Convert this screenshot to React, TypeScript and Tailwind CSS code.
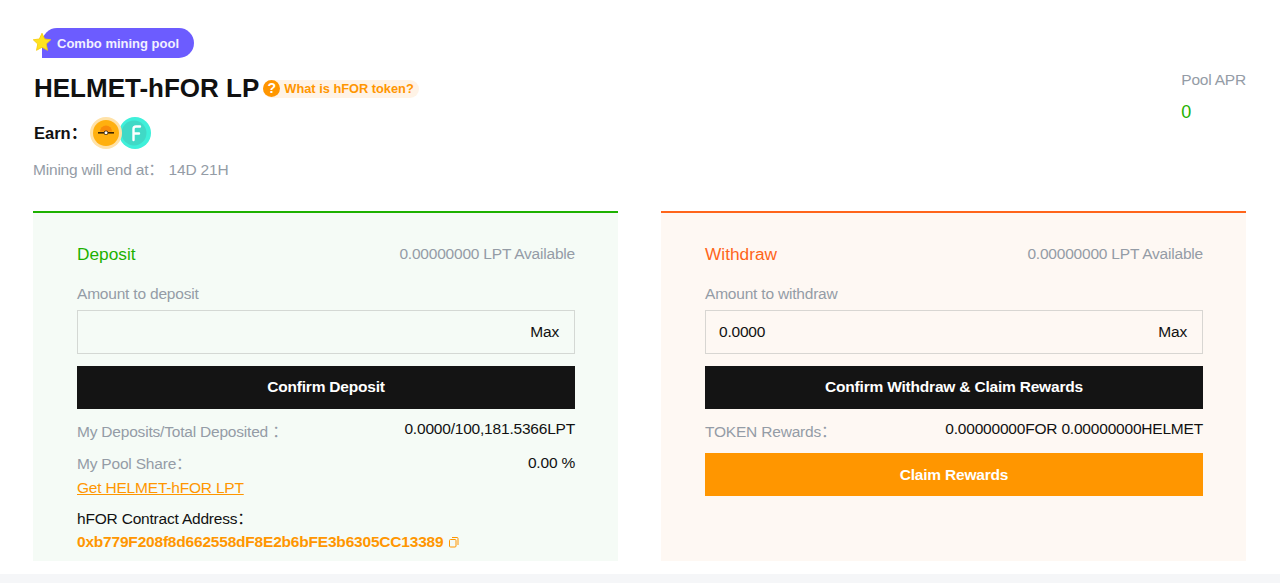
const font = "font-['Liberation_Sans','Noto_Sans_CJK_SC',Arial,sans-serif]";
const body = "text-[15.5px] tracking-[-0.2px]";

function Star() {
  return (
    <svg viewBox="0 0 24 24" className="absolute left-[-10px] top-[4px] h-[20px] w-[20px]">
      <path
        d="M12 1.500l3.200 6.900 7.300.9-5.400 5.100 1.500 7.600L12 18.300l-6.600 3.700 1.500-7.600L1.500 9.300l7.300-.9z"
        fill="#ffe21f"
        stroke="#f7cb08"
        strokeWidth="1"
        strokeLinejoin="round"
      />
    </svg>
  );
}

function HelmetCoin() {
  return (
    <svg viewBox="0 0 32 32" className="relative z-10 h-[32px] w-[32px]">
      <circle cx="16" cy="16" r="16" fill="#ffe2a8" />
      <circle cx="16" cy="16" r="13" fill="#ffb00f" />
      <path d="M10 14.500a6 6 0 0 1 12 0z" fill="#f98c0a" />
      <rect x="8" y="15" width="16" height="1.600" fill="#3a2505" />
      <circle cx="16" cy="15.800" r="2.200" fill="#3a2505" />
      <circle cx="16" cy="15.800" r="1.500" fill="#fff" />
    </svg>
  );
}

function ForCoin() {
  return (
    <svg viewBox="0 0 32 32" className="ml-[-3px] h-[32px] w-[32px]">
      <circle cx="16" cy="16" r="16" fill="#3ff0da" />
      <circle cx="15" cy="16" r="12.500" fill="#40d9c6" />
      <path d="M21 9.500h-4a2.500 2.500 0 0 0-2.500 2.500v11M14.500 16.500h5.500" fill="none" stroke="#fff" strokeWidth="2.400" strokeLinecap="round" />
    </svg>
  );
}

function CopyIcon() {
  return (
    <svg viewBox="0 0 12 12" className="ml-[5px] inline-block h-[12px] w-[12px]" fill="none" stroke="#ff9600" strokeWidth="1">
      <rect x="1.500" y="3.500" width="6.500" height="7.500" rx="1" />
      <path d="M4 1.500h5a1 1 0 0 1 1 1v6.500" />
    </svg>
  );
}

export default function App() {
  return (
    <div className={`${font} min-h-[583px] bg-white`}>
      <div className="h-[574px] overflow-hidden pt-[28px] pr-[34px] pl-[33px]">
        <div className="flex justify-between">
          <div>
            <div className="relative ml-[9px] flex h-[30px] w-[152px] items-center rounded-tl-[15px] rounded-r-[15px] bg-[#6c5cff] pt-[2px] pl-[15px] text-[13px] font-bold text-[#f2f0ff]">
              <Star />
              Combo mining pool
            </div>
            <div className="mt-[13px] flex h-[35px] items-center pl-px">
              <h1 className="text-[26px] leading-[35px] font-bold text-[#111111]">HELMET-hFOR LP</h1>
              <div className="ml-[4px] flex h-[18px] items-center rounded-full bg-[#fff3e6] pr-[5px] text-[12.8px] font-bold text-[#ff9600]">
                <span className="mr-[4px] flex h-[17px] w-[17px] items-center justify-center rounded-full bg-[#ff9600] text-[14px] text-white">?</span>
                What is hFOR token?
              </div>
            </div>
            <div className="mt-[11px] flex h-[33px] items-center pl-px">
              <span className="w-[56px] text-[16.5px] font-bold text-[#111111]">Earn：</span>
              <div className="-mt-[2px] flex">
                <HelmetCoin />
                <ForCoin />
              </div>
            </div>
            <div className={`mt-[10px] leading-[20px] text-[#949ca6] ${body}`}>
              Mining will end at：<span className="ml-[5px]">14D 21H</span>
            </div>
          </div>
          <div className="pt-[41px]">
            <div className={`leading-[22px] text-[#949ca6] ${body}`}>Pool APR</div>
            <div className="mt-[10px] text-[18px] leading-[22px] text-[#1db100]">0</div>
          </div>
        </div>

        <div className="mt-[31px] grid grid-cols-2 gap-[43px]">
          <section className="h-[350px] border-t-2 border-[#1db100] bg-[#f5fbf6] pt-[30px] pr-[43px] pl-[44px]">
            <div className="flex items-center justify-between leading-[22px]">
              <span className="text-[17.3px] text-[#1db100]">Deposit</span>
              <span className={`text-[#949ca6] ${body}`}>0.00000000 LPT Available</span>
            </div>
            <div className={`mt-[19px] leading-[20px] text-[#949ca6] ${body}`}>Amount to deposit</div>
            <div className={`mt-[6px] flex h-[44px] items-center justify-end border border-[#d4d8d4] pr-[15px] text-[#111111] ${body}`}>Max</div>
            <button className={`mt-[12px] block h-[43px] w-full bg-[#141414] pb-px font-bold text-white ${body}`}>Confirm Deposit</button>
            <div className={`mt-[10px] flex justify-between leading-[20px] ${body}`}>
              <span className="pt-[3px] text-[#949ca6]">My Deposits/Total Deposited ：</span>
              <span className="text-[#111111]">0.0000/100,181.5366LPT</span>
            </div>
            <div className={`mt-[11px] flex justify-between leading-[20px] ${body}`}>
              <span className="pt-[1px] text-[#949ca6]">My Pool Share：</span>
              <span className="text-[#111111]">0.00 %</span>
            </div>
            <a className={`mt-[4px] block leading-[20px] text-[#ff9600] underline ${body}`}>Get HELMET-hFOR LPT</a>
            <div className={`mt-[11px] leading-[20px] text-[#111111] ${body}`}>hFOR Contract Address：</div>
            <div className={`mt-[3px] flex items-center leading-[20px] font-bold text-[#ff9600] ${body}`}>
              0xb779F208f8d662558dF8E2b6bFE3b6305CC13389
              <CopyIcon />
            </div>
          </section>

          <section className="h-[350px] border-t-2 border-[#ff651a] bg-[#fef8f3] pt-[30px] pr-[43px] pl-[44px]">
            <div className="flex items-center justify-between leading-[22px]">
              <span className="text-[17.3px] text-[#ff651a]">Withdraw</span>
              <span className={`text-[#949ca6] ${body}`}>0.00000000 LPT Available</span>
            </div>
            <div className={`mt-[19px] leading-[20px] text-[#949ca6] ${body}`}>Amount to withdraw</div>
            <div className={`mt-[6px] flex h-[44px] items-center justify-between border border-[#d8d6d2] pr-[15px] pl-[13px] text-[#111111] ${body}`}>
              <span>0.0000</span>
              <span>Max</span>
            </div>
            <button className={`mt-[12px] block h-[43px] w-full bg-[#141414] pb-px font-bold text-white ${body}`}>Confirm Withdraw &amp; Claim Rewards</button>
            <div className={`mt-[10px] flex justify-between leading-[20px] ${body}`}>
              <span className="pt-[3px] text-[#949ca6]">TOKEN Rewards：</span>
              <span className="text-[#111111]">0.00000000FOR 0.00000000HELMET</span>
            </div>
            <button className={`mt-[11px] block h-[43px] w-full bg-[#ff9600] font-bold text-white ${body}`}>Claim Rewards</button>
          </section>
        </div>
      </div>
      <div className="h-[9px] bg-[#f5f6f8]" />
    </div>
  );
}
